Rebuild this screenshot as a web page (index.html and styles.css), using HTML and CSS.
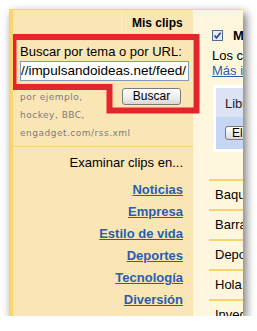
FILE: index.html
```html
<!DOCTYPE html>
<html lang="es">
<head>
    <meta charset="UTF-8">
    <title>Mis clips</title>
    <link rel="stylesheet" href="styles.css">
</head>
<body>

<div class="window">

    <div class="sidebar">
        <div class="tab-row"><span class="tab">Mis clips</span></div>

        <div class="search">
            <div class="search-label">Buscar por tema o por URL:</div>
            <div class="url-field"><span>http://impulsandoideas.net/feed/</span></div>
            <div class="search-foot">
                <button class="btn btn-search">Buscar</button>
                <p class="hint">por ejemplo,<br>hockey, BBC,<br>engadget.com/rss.xml</p>
            </div>
        </div>

        <div class="browse">
            <p class="browse-title">Examinar clips en...</p>
            <ul class="topics">
                <li><a href="#">Noticias</a></li>
                <li><a href="#">Empresa</a></li>
                <li><a href="#">Estilo de vida</a></li>
                <li><a href="#">Deportes</a></li>
                <li><a href="#">Tecnología</a></li>
                <li><a href="#">Diversión</a></li>
            </ul>
        </div>
    </div>

    <div class="clips">
        <div class="clips-inner">
            <div class="clips-head">
                <svg class="check" width="11" height="11" viewBox="0 0 11 11">
                    <rect x="0.5" y="0.5" width="10" height="10" fill="#e9ebf1" stroke="#4f6a91"/>
                    <path d="M2.5 5.5 L4.5 7.8 L8.6 2.8" fill="none" stroke="#2a4d9c" stroke-width="1.8"/>
                </svg>
                <b>Mis clips de noticias</b>
            </div>
            <p class="clips-text">Los clips aparecen aquí<br><a href="#">Más información</a></p>

            <div class="lib-box">
                <div class="lib-head">Librería de clips</div>
                <div class="lib-body"><button class="btn btn-small">Elegir clips</button></div>
            </div>

            <ul class="feed-list">
                <li>Baquero en la red</li>
                <li>Barrapunto</li>
                <li>Deportes al día</li>
                <li>Hola.com</li>
                <li>Inveduca</li>
            </ul>
        </div>
    </div>

    <svg class="highlight" width="234" height="307" viewBox="0 0 234 307">
        <path d="M4.5 28 H187.5 V101.5 H100.5 V78 H4.5 Z" fill="none" stroke="#e3262b" stroke-width="6"/>
    </svg>

</div>

</body>
</html>
```

FILE: styles.css
```css
body {
    margin: 0;
    background: #fff;
    font-family: "Liberation Sans", Arial, sans-serif;
    font-size: 13px;
    color: #000;
}

.window {
    position: relative;
    display: flex;
    width: 234px;
    height: 307px;
    margin: 9px 0 0 9px;
    box-sizing: border-box;
    border-top: 1px solid #fbd46c;
    border-left: 4px solid #fbd46c;
    overflow: hidden;
    box-shadow: 3px 4px 9px rgba(0, 0, 0, 0.55);
}

/* left column */

.sidebar {
    width: 180px;
    flex: none;
    background: #fae5b5;
}

.tab-row {
    height: 24px;
}

.tab {
    display: block;
    height: 24px;
    margin-left: 108px;
    padding-left: 10px;
    border-left: 1px solid #fdeecb;
    font-size: 12px;
    font-weight: bold;
    line-height: 26px;
}

.search {
    padding: 10px 4px 4px 7px;
    border-bottom: 1px solid #f8d472;
}

.search-label {
    line-height: 15px;
}

.url-field {
    display: flex;
    justify-content: flex-end;
    width: 169px;
    height: 20px;
    margin-top: 2px;
    box-sizing: border-box;
    padding-right: 2px;
    border: 1px solid #7f9db9;
    background: #fff;
    font-size: 13.5px;
    line-height: 18px;
    white-space: nowrap;
    overflow: hidden;
}

.search-foot {
    margin-top: 7px;
}

.btn {
    font-family: "Liberation Sans", Arial, sans-serif;
    color: #000;
    border: 1px solid #7b7b7b;
    border-radius: 3px;
    background: linear-gradient(#ffffff, #ececec 60%, #d8d8d8);
    padding: 0;
}

.btn-search {
    float: right;
    width: 59px;
    height: 17px;
    margin-right: 8px;
    font-size: 12px;
    line-height: 15px;
}

.hint {
    margin: 0;
    font-family: "DejaVu Sans", Verdana, sans-serif;
    font-size: 9px;
    letter-spacing: 0.5px;
    line-height: 18px;
    color: #7a7b82;
}

.browse {
    padding: 8px 10px 0 0;
    text-align: right;
}

.browse-title {
    margin: 0;
    line-height: 15px;
}

.topics {
    list-style: none;
    margin: 9px 0 0 0;
    padding: 0;
    line-height: 22px;
}

.topics a {
    color: #2a5db0;
    font-weight: bold;
}

/* right column */

.clips {
    flex: 1;
    background: #fff7dd;
    overflow: hidden;
}

.clips-inner {
    width: 300px;
    padding: 18px 0 0 19px;
}

.clips-head {
    display: flex;
    align-items: center;
    gap: 10px;
    height: 15px;
}

.check {
    display: block;
}

.clips-text {
    margin: 5px 0 0 0;
    line-height: 15px;
}

.clips-text a {
    color: #2a5db0;
}

.lib-box {
    margin: 7px 0 0 1px;
    border: 3px solid #fff;
}

.lib-head {
    padding: 8px 9px 6px;
    line-height: 15px;
    background: #dbe3f4;
    color: #222;
}

.lib-body {
    height: 32px;
    padding: 8px 9px 0;
    box-sizing: border-box;
    background: #c6d7f5;
}

.btn-small {
    height: 14px;
    padding: 0 6px;
    font-size: 12px;
    line-height: 12px;
}

.feed-list {
    list-style: none;
    margin: 27px 0 0 -3px;
    padding: 0;
}

.feed-list li {
    padding: 6px 0 7px 6px;
    border-top: 2px solid #f8d56c;
    line-height: 15px;
}

.highlight {
    position: absolute;
    top: -1px;
    left: -4px;
}
```
